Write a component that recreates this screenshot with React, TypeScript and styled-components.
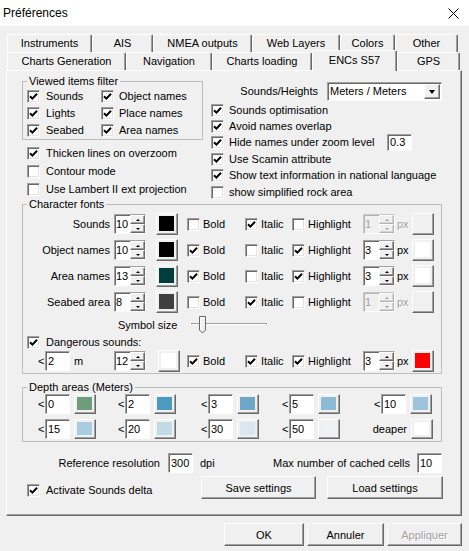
import React from 'react';
import styled, { createGlobalStyle } from 'styled-components';

const GlobalStyle = createGlobalStyle`
  html, body {
    margin: 0;
    padding: 0;
  }
  body {
    background: #f0f0f0;
    font-family: "Liberation Sans", Arial, sans-serif;
    font-size: 11px;
    color: #000;
  }
`;

const Window = styled.div`
  width: 469px;
  height: 551px;
  display: flex;
  flex-direction: column;
  background: #f0f0f0;
  overflow: hidden;
  line-height: 13px;
`;

const TitleBar = styled.div`
  height: 26px;
  flex: none;
  background: #fff;
  display: flex;
  align-items: center;
  justify-content: space-between;
  padding: 0 10px 0 3px;
  font-size: 12px;
`;

const TabStrip = styled.div`
  margin: 8px 0 0 7px;
  display: flex;
  flex-direction: column;
`;

const TabRow = styled.div`
  display: flex;
  height: 18px;
`;

const Tab = styled.div<{ $w: number; $active?: boolean }>`
  width: ${p => p.$w}px;
  height: ${p => (p.$active ? 21 : 18)}px;
  margin-top: ${p => (p.$active ? -2 : 0)}px;
  box-sizing: border-box;
  display: flex;
  align-items: center;
  justify-content: center;
  border-top: 1px solid #fff;
  border-left: 1px solid #fff;
  border-right: 1px solid #696969;
  box-shadow: inset -1px 0 0 #a0a0a0;
  border-radius: 2px 2px 0 0;
  background: #f0f0f0;
  position: ${p => (p.$active ? 'relative' : 'static')};
  z-index: ${p => (p.$active ? 1 : 'auto')};
  padding-bottom: ${p => (p.$active ? 2 : 0)}px;
`;

const Panel = styled.div`
  margin-left: 6px;
  width: 456px;
  height: 446px;
  flex: none;
  box-sizing: border-box;
  border-top: 1px solid #fff;
  border-left: 1px solid #fff;
  border-right: 1px solid #696969;
  border-bottom: 1px solid #696969;
  box-shadow: inset -1px -1px 0 #a0a0a0;
  display: flex;
  flex-direction: column;
`;

const TopSection = styled.div`
  height: 127px;
  flex: none;
  display: flex;
  gap: 8px;
  padding-left: 15px;
`;

const LeftCol = styled.div`
  width: 181px;
  display: flex;
  flex-direction: column;
`;

const RightCol = styled.div`
  width: 231px;
  display: flex;
  flex-direction: column;
`;

const GroupStack = styled.div`
  padding-left: 15px;
  display: flex;
  flex-direction: column;
`;

const Group = styled.fieldset<{ $mt?: number; $w?: number }>`
  margin: ${p => p.$mt ?? 0}px 0 0 0;
  padding: 0 0 0 4px;
  width: ${p => (p.$w ? `${p.$w}px` : 'auto')};
  box-sizing: border-box;
  border: 1px solid #bdbdbd;
  min-width: 0;
`;

const Legend = styled.legend`
  padding: 0 2px;
  margin: 0;
  line-height: 13px;
`;

const FilterGrid = styled.div`
  display: grid;
  grid-template-columns: 74px auto;
  grid-auto-rows: 17px;
`;

const ExtraChecks = styled.div`
  margin-top: 4px;
  padding-left: 5px;
  display: flex;
  flex-direction: column;
`;

const Check = styled.div<{ $gap?: number; $h?: number; $w?: number }>`
  display: flex;
  align-items: center;
  gap: ${p => p.$gap ?? 5}px;
  height: ${p => p.$h ?? 17}px;
  width: ${p => (p.$w ? `${p.$w}px` : 'auto')};
  white-space: nowrap;
  flex: none;
`;

const Box = styled.span`
  width: 13px;
  height: 13px;
  box-sizing: border-box;
  flex: none;
  background: #fff;
  border: 1px solid;
  border-color: #a0a0a0 #fff #fff #a0a0a0;
  box-shadow: inset 1px 1px 0 #696969, inset -1px -1px 0 #e3e3e3;
  display: flex;
  align-items: center;
  justify-content: center;
`;

const HeightsRow = styled.div`
  margin-top: 11px;
  height: 19px;
  display: flex;
  align-items: center;
  justify-content: flex-end;
  gap: 9px;
`;

const Sunken = styled.div<{ $w: number; $h?: number; $disabled?: boolean; $ml?: number }>`
  width: ${p => p.$w}px;
  height: ${p => p.$h ?? 20}px;
  margin-left: ${p => p.$ml ?? 0}px;
  flex: none;
  box-sizing: border-box;
  display: flex;
  align-items: center;
  background: ${p => (p.$disabled ? '#f0f0f0' : '#fff')};
  border: 1px solid;
  border-color: ${p => (p.$disabled ? '#c8c8c8 #fff #fff #c8c8c8' : '#a0a0a0 #fff #fff #a0a0a0')};
  box-shadow: inset 1px 1px 0 ${p => (p.$disabled ? '#b4b4b4' : '#696969')};
  padding-left: 2px;
  color: ${p => (p.$disabled ? '#a0a0a0' : '#000')};
  white-space: nowrap;
  overflow: hidden;
`;

const SpinFrame = styled(Sunken)`
  padding-left: 1px;
`;

const ComboText = styled.span`
  flex: 1;
`;

const DropButton = styled.span`
  width: 16px;
  height: 15px;
  box-sizing: border-box;
  margin-right: 1px;
  border: 1px solid;
  border-color: #fff #696969 #696969 #fff;
  box-shadow: inset -1px -1px 0 #a0a0a0;
  background: #f0f0f0;
  display: flex;
  align-items: center;
  justify-content: center;
`;

const DropArrow = styled.span`
  width: 0;
  height: 0;
  border-left: 3.5px solid transparent;
  border-right: 3.5px solid transparent;
  border-top: 4px solid #000;
`;

const RightChecks = styled.div`
  margin-top: 1px;
  display: flex;
  flex-direction: column;
`;

const CharGrid = styled.div`
  display: grid;
  grid-template-columns: 87px 42px 31px 58px 47px 71px 32px 17px 22px;
  align-items: center;
`;

const DangerRow = styled(CharGrid)`
  padding-bottom: 1px;
`;

const FontRowLabel = styled.div`
  height: 26px;
  display: flex;
  align-items: center;
  justify-content: flex-end;
  padding-right: 4px;
  white-space: nowrap;
`;

const Cell = styled.div<{ $h?: number; $pl?: number }>`
  height: ${p => p.$h ?? 26}px;
  display: flex;
  align-items: center;
  padding-left: ${p => p.$pl ?? 0}px;
`;

const SpinText = styled.span`
  flex: 1;
`;

const SpinButtons = styled.span`
  width: 15px;
  height: 18px;
  display: flex;
  flex-direction: column;
  flex: none;
`;

const SpinButton = styled.span<{ $disabled?: boolean }>`
  flex: 1;
  box-sizing: border-box;
  border: 1px solid;
  border-color: ${p => (p.$disabled ? '#fff #b4b4b4 #b4b4b4 #fff' : '#fff #696969 #696969 #fff')};
  box-shadow: inset -1px -1px 0 ${p => (p.$disabled ? '#d4d4d4' : '#a0a0a0')};
  background: #f0f0f0;
  display: flex;
  align-items: center;
  justify-content: center;
`;

const Arrow = styled.span<{ $up?: boolean; $disabled?: boolean }>`
  width: 0;
  height: 0;
  border-left: 2px solid transparent;
  border-right: 2px solid transparent;
  ${p =>
    p.$up
      ? `border-bottom: 2px solid ${p.$disabled ? '#a0a0a0' : '#000'};`
      : `border-top: 2px solid ${p.$disabled ? '#a0a0a0' : '#000'};`}
`;

const ColorButton = styled.div<{ $h?: number }>`
  width: 22px;
  height: ${p => p.$h ?? 22}px;
  flex: none;
  box-sizing: border-box;
  border: 1px solid;
  border-color: #fff #696969 #696969 #fff;
  box-shadow: inset -1px -1px 0 #a0a0a0;
  background: #f0f0f0;
  padding: 2px 3px 3px 2px;
`;

const Swatch = styled.div<{ $color: string }>`
  width: 100%;
  height: 100%;
  background: ${p => p.$color};
`;

const Muted = styled.span<{ $disabled?: boolean; $ml?: number }>`
  margin-left: ${p => p.$ml ?? 0}px;
  color: ${p => (p.$disabled ? '#a0a0a0' : '#000')};
  text-shadow: ${p => (p.$disabled ? '1px 1px 0 #fff' : 'none')};
`;

const SymbolRow = styled.div`
  height: 20px;
  display: flex;
  align-items: center;
  padding-left: 91px;
  gap: 13px;
`;

const DepthGrid = styled.div`
  display: grid;
  grid-template-columns: 80px 83px 81px 92px 59px;
  row-gap: 5px;
  padding: 0 0 2px 11px;
`;

const DepthItem = styled.div<{ $end?: boolean }>`
  height: 20px;
  display: flex;
  align-items: center;
  justify-content: ${p => (p.$end ? 'flex-end' : 'flex-start')};
  gap: 4px;
`;

const LessField = styled.div`
  display: flex;
  align-items: center;
`;

const Lt = styled.span`
  width: 7px;
  flex: none;
`;

const RefRow = styled.div`
  margin-top: 11px;
  height: 20px;
  display: flex;
  align-items: center;
  padding-right: 19px;
`;

const RefLabel = styled.span`
  width: 153px;
  text-align: right;
  margin-right: 8px;
`;

const Spacer = styled.span`
  flex: 1;
`;

const ActionRow = styled.div`
  margin-top: 3px;
  display: grid;
  grid-template-columns: 183px 115px 116px;
  column-gap: 11px;
  height: 23px;
`;

const DeltaCell = styled.div`
  padding: 8px 0 0 20px;
`;

const Button = styled.button<{ $w?: number; $disabled?: boolean }>`
  width: ${p => (p.$w ? `${p.$w}px` : '100%')};
  height: 23px;
  box-sizing: border-box;
  font-family: inherit;
  font-size: 11px;
  padding: 0;
  background: #f0f0f0;
  border: 1px solid;
  border-color: #fff #696969 #696969 #fff;
  box-shadow: inset -1px -1px 0 #a0a0a0;
  color: ${p => (p.$disabled ? '#a0a0a0' : '#000')};
  text-shadow: ${p => (p.$disabled ? '1px 1px 0 #fff' : 'none')};
`;

const Footer = styled.div`
  margin-top: 7px;
  display: flex;
  justify-content: flex-end;
  gap: 3px;
  padding-right: 7px;
`;

const Tick = () => (
  <svg width="9" height="9" viewBox="0 0 9 9">
    <path d="M1 4.2 L3.4 6.6 L8 1.8" fill="none" stroke="#000" strokeWidth="2" />
  </svg>
);

const CheckItem: React.FC<{ label: string; checked?: boolean; gap?: number; h?: number; w?: number }> = ({
  label,
  checked,
  gap,
  h,
  w,
}) => (
  <Check $gap={gap} $h={h} $w={w}>
    <Box>{checked && <Tick />}</Box>
    <span>{label}</span>
  </Check>
);

const Spin: React.FC<{ value: string; disabled?: boolean }> = ({ value, disabled }) => (
  <SpinFrame $w={32} $disabled={disabled}>
    <SpinText>{value}</SpinText>
    <SpinButtons>
      <SpinButton $disabled={disabled}>
        <Arrow $up $disabled={disabled} />
      </SpinButton>
      <SpinButton $disabled={disabled}>
        <Arrow $disabled={disabled} />
      </SpinButton>
    </SpinButtons>
  </SpinFrame>
);

const ColorPick: React.FC<{ color?: string; h?: number }> = ({ color, h }) => (
  <ColorButton $h={h}>{color && <Swatch $color={color} />}</ColorButton>
);

const CloseIcon = () => (
  <svg width="11" height="11" viewBox="0 0 11 11">
    <path d="M0.5 0.5 L10.5 10.5 M10.5 0.5 L0.5 10.5" stroke="#000" strokeWidth="1" />
  </svg>
);

const SliderDrawing = () => (
  <svg width="78" height="20" viewBox="0 0 78 20">
    <line x1="1" y1="8.5" x2="77" y2="8.5" stroke="#a0a0a0" />
    <line x1="1" y1="9.5" x2="77" y2="9.5" stroke="#fff" />
    <path d="M9.5 1.5 H15.5 V15 L12.5 18 L9.5 15 Z" fill="#f0f0f0" stroke="#696969" />
    <path d="M10.5 14.5 V2.5 H14.5" fill="none" stroke="#fff" />
  </svg>
);

const backTabs = [
  { label: 'Instruments', w: 85 },
  { label: 'AIS', w: 61 },
  { label: 'NMEA outputs', w: 99 },
  { label: 'Web Layers', w: 88 },
  { label: 'Colors', w: 55 },
  { label: 'Other', w: 63 },
];

const frontTabs = [
  { label: 'Charts Generation', w: 119 },
  { label: 'Navigation', w: 86 },
  { label: 'Charts loading', w: 100 },
  { label: 'ENCs S57', w: 85, active: true },
  { label: 'GPS', w: 63 },
];

interface FontRow {
  name: string;
  size: string;
  color: string;
  bold: boolean;
  italic: boolean;
  highlight: boolean;
  px: string;
  hlColor?: string;
}

const fontRows: FontRow[] = [
  { name: 'Sounds', size: '10', color: '#000000', bold: false, italic: true, highlight: false, px: '1' },
  { name: 'Object names', size: '10', color: '#000000', bold: true, italic: false, highlight: true, px: '3', hlColor: '#fff' },
  { name: 'Area names', size: '13', color: '#003d3d', bold: true, italic: false, highlight: true, px: '3', hlColor: '#fff' },
  { name: 'Seabed area', size: '8', color: '#404040', bold: false, italic: true, highlight: false, px: '1' },
];

const depthTop = [
  { v: '0', c: '#6f9d7b' },
  { v: '2', c: '#4b9bc0' },
  { v: '3', c: '#6ea7c7' },
  { v: '5', c: '#8cbcd3' },
  { v: '10', c: '#9dc3da' },
];

const depthBottom = [
  { v: '15', c: '#a9cce0' },
  { v: '20', c: '#c2dae6' },
  { v: '30', c: '#d9e8f0' },
  { v: '50', c: '#eef2f5' },
];

const DepthCell: React.FC<{ value: string; color: string }> = ({ value, color }) => (
  <DepthItem>
    <LessField>
      <Lt>&lt;</Lt>
      <Sunken $w={25}>{value}</Sunken>
    </LessField>
    <ColorPick color={color} h={20} />
  </DepthItem>
);

export default function App() {
  return (
    <>
      <GlobalStyle />
      <Window>
        <TitleBar>
          <span>Préférences</span>
          <CloseIcon />
        </TitleBar>

        <TabStrip>
          <TabRow>
            {backTabs.map(t => (
              <Tab key={t.label} $w={t.w}>
                {t.label}
              </Tab>
            ))}
          </TabRow>
          <TabRow>
            {frontTabs.map(t => (
              <Tab key={t.label} $w={t.w} $active={t.active}>
                {t.label}
              </Tab>
            ))}
          </TabRow>
        </TabStrip>

        <Panel>
          <TopSection>
            <LeftCol>
              <Group $mt={4}>
                <Legend>Viewed items filter</Legend>
                <FilterGrid>
                  <CheckItem label="Sounds" checked gap={6} />
                  <CheckItem label="Object names" checked />
                  <CheckItem label="Lights" checked gap={6} />
                  <CheckItem label="Place names" checked />
                  <CheckItem label="Seabed" checked gap={6} />
                  <CheckItem label="Area names" checked />
                </FilterGrid>
              </Group>
              <ExtraChecks>
                <CheckItem label="Thicken lines on overzoom" checked h={18} gap={6} />
                <CheckItem label="Contour mode" h={18} gap={6} />
                <CheckItem label="Use Lambert II ext projection" h={18} gap={6} />
              </ExtraChecks>
            </LeftCol>

            <RightCol>
              <HeightsRow>
                <span>Sounds/Heights</span>
                <Sunken $w={115} $h={19}>
                  <ComboText>Meters / Meters</ComboText>
                  <DropButton>
                    <DropArrow />
                  </DropButton>
                </Sunken>
              </HeightsRow>
              <RightChecks>
                <CheckItem label="Sounds optimisation" checked h={16.4} />
                <CheckItem label="Avoid names overlap" checked h={16.4} />
                <Check $h={16.4} $gap={0}>
                  <CheckItem label="Hide names under zoom level" checked h={16.4} w={176} />
                  <Sunken $w={25} $h={17}>
                    0.3
                  </Sunken>
                </Check>
                <CheckItem label="Use Scamin attribute" checked h={16.4} />
                <CheckItem label="Show text information in national language" checked h={16.4} />
                <CheckItem label="show simplified rock area" h={16.4} />
              </RightChecks>
            </RightCol>
          </TopSection>

          <GroupStack>
            <Group $w={420}>
              <Legend>Character fonts</Legend>
              <CharGrid>
                {fontRows.map(r => {
                  const off = !r.highlight;
                  return (
                    <React.Fragment key={r.name}>
                      <FontRowLabel>{r.name}</FontRowLabel>
                      <Cell>
                        <Spin value={r.size} />
                      </Cell>
                      <Cell>
                        <ColorPick color={r.color} />
                      </Cell>
                      <Cell>
                        <CheckItem label="Bold" checked={r.bold} gap={3} />
                      </Cell>
                      <Cell>
                        <CheckItem label="Italic" checked={r.italic} gap={3} />
                      </Cell>
                      <Cell>
                        <CheckItem label="Highlight" checked={r.highlight} gap={3} />
                      </Cell>
                      <Cell>
                        <Spin value={r.px} disabled={off} />
                      </Cell>
                      <Cell $pl={2}>
                        <Muted $disabled={off}>px</Muted>
                      </Cell>
                      <Cell>
                        <ColorPick color={r.hlColor} />
                      </Cell>
                    </React.Fragment>
                  );
                })}
              </CharGrid>
              <SymbolRow>
                <span>Symbol size</span>
                <SliderDrawing />
              </SymbolRow>
              <CheckItem label="Dangerous sounds:" checked h={15} gap={6} />
              <DangerRow>
                <Cell $h={22} $pl={11}>
                  <LessField>
                    <Lt>&lt;</Lt>
                    <Sunken $w={25}>2</Sunken>
                  </LessField>
                  <Muted $ml={4}>m</Muted>
                </Cell>
                <Cell $h={22}>
                  <Spin value="12" />
                </Cell>
                <Cell $h={22} $pl={2}>
                  <ColorPick color="#fff" />
                </Cell>
                <Cell $h={22}>
                  <CheckItem label="Bold" checked gap={3} />
                </Cell>
                <Cell $h={22}>
                  <CheckItem label="Italic" checked gap={3} />
                </Cell>
                <Cell $h={22}>
                  <CheckItem label="Highlight" checked gap={3} />
                </Cell>
                <Cell $h={22}>
                  <Spin value="3" />
                </Cell>
                <Cell $h={22} $pl={2}>
                  <Muted>px</Muted>
                </Cell>
                <Cell $h={22}>
                  <ColorPick color="#ff0000" />
                </Cell>
              </DangerRow>
            </Group>

            <Group $mt={7} $w={420}>
              <Legend>Depth areas (Meters)</Legend>
              <DepthGrid>
                {depthTop.map(d => (
                  <DepthCell key={d.v} value={d.v} color={d.c} />
                ))}
                {depthBottom.map(d => (
                  <DepthCell key={d.v} value={d.v} color={d.c} />
                ))}
                <DepthItem $end>
                  <span>deaper</span>
                  <ColorPick color="#fff" h={20} />
                </DepthItem>
              </DepthGrid>
            </Group>
          </GroupStack>

          <RefRow>
            <RefLabel>Reference resolution</RefLabel>
            <Sunken $w={25}>300</Sunken>
            <Muted $ml={7}>dpi</Muted>
            <Spacer />
            <span>Max number of cached cells</span>
            <Sunken $w={25} $ml={7}>
              10
            </Sunken>
          </RefRow>

          <ActionRow>
            <DeltaCell>
              <CheckItem label="Activate Sounds delta" checked h={13} gap={6} />
            </DeltaCell>
            <Button>Save settings</Button>
            <Button>Load settings</Button>
          </ActionRow>
        </Panel>

        <Footer>
          <Button $w={80}>OK</Button>
          <Button $w={77}>Annuler</Button>
          <Button $w={75} $disabled>
            Appliquer
          </Button>
        </Footer>
      </Window>
    </>
  );
}
